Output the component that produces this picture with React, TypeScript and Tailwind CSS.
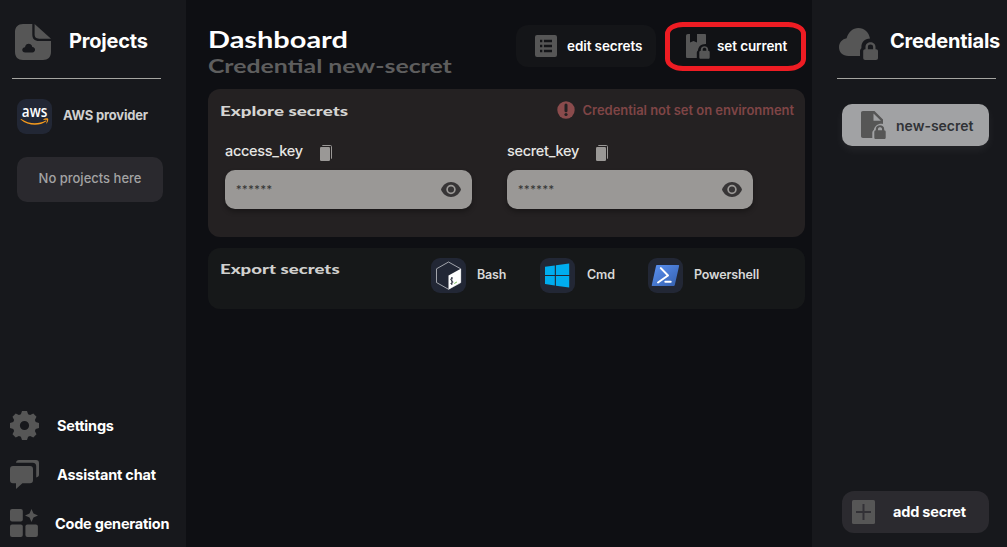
import type { ReactNode } from "react";

type IconProps = { className?: string };

function CloudFileIcon({ className }: IconProps) {
  return (
    <svg viewBox="0 0 36 36" className={className} fill="currentColor">
      <path fillRule="evenodd" d="M17.3 0H8C3 0 0 3 0 8v20c0 5 3 8 8 8h20c5 0 8-3 8-8V17H24c-4.600 0-6.700-2.200-6.700-6.500V0ZM10.200 28.500c-3.700 0-3.900-5.100-.2-5.300.6-4.500 6.600-4.500 7.300-.1 3.700.1 3.700 5.400 0 5.400Z" />
      <path d="M19.600 0 36 14.700H24.200c-3.300 0-4.600-1.300-4.600-4.600V0Z" />
    </svg>
  );
}

function CloudLockIcon({ className }: IconProps) {
  return (
    <svg viewBox="0 0 39 33" className={className} fill="currentColor">
      <path d="M21 28H9.500C3.600 28 0 24 0 19.200c0-4.700 3.300-8.300 7.600-9C9.400 3.800 14 0 19.300 0c6.200 0 10.700 4.500 11.700 10.600-5.500.3-8.600 3.700-8.600 8.500v1.200c-1.100.8-1.400 1.800-1.400 3.200V28Z" />
      <path fillRule="evenodd" d="M26.500 21.300V19c0-6.300 10-6.300 10 0v2.300h.5c1.300 0 2 .7 2 2V30c0 1.300-.7 2-2 2H26.200c-1.300 0-2-.7-2-2v-6.700c0-1.300.7-2 2-2h.3Zm2.400 0h5.200V19c0-3.200-5.200-3.200-5.200 0v2.300Z" />
    </svg>
  );
}

function FileLockIcon({ className }: IconProps) {
  return (
    <svg viewBox="0 0 25 28" className={className} fill="currentColor">
      <path fillRule="evenodd" d="M0 2C0 .7.700 0 2 0h11.500L22 8.500v4.400c-4.700-.8-8.500 2-9.200 6.200-1 .7-1.500 1.500-1.500 2.800V27H2c-1.300 0-2-.7-2-2V2Zm12.500.4v7.300h7.400L12.500 2.400Z" />
      <path fillRule="evenodd" d="M14.800 19.200v-1.100c0-5 8.400-5 8.400 0v1.100c1 .1 1.500.7 1.500 1.700v5.500c0 1.100-.6 1.600-1.700 1.600h-8c-1.100 0-1.700-.5-1.700-1.600v-5.500c0-1 .5-1.600 1.500-1.700Zm2.200 0h4v-1.100c0-2.400-4-2.400-4 0v1.100Z" />
    </svg>
  );
}

function BookLockIcon({ className }: IconProps) {
  return (
    <svg viewBox="0 0 24 25" className={className} fill="currentColor">
      <path d="M2 0h2v8.600L7.500 6.900 11 8.600V0h7.600C19.700 0 20 .4 20 1.500V10c-4.800-.2-7.800 2.600-8 6.500-1 .8-1.200 1.500-1.200 2.700V24H1.600C.5 24 0 23.500 0 22.400V2C0 .7.600 0 2 0Z" />
      <path fillRule="evenodd" d="M14.800 16.700v-1.200c0-4.500 7.400-4.500 7.400 0v1.200c1.200.1 1.500.7 1.500 1.600v5c0 1-.5 1.500-1.500 1.500h-7.400c-1 0-1.500-.5-1.500-1.500v-5c0-.9.4-1.500 1.500-1.600Zm1.900 0h3.600v-1.200c0-2.300-3.600-2.300-3.600 0v1.200Z" />
    </svg>
  );
}

function ListIcon({ className }: IconProps) {
  return (
    <svg viewBox="0 0 22 22" className={className} fill="currentColor">
      <path fillRule="evenodd" d="M2 0h18a2 2 0 0 1 2 2v18a2 2 0 0 1-2 2H2a2 2 0 0 1-2-2V2a2 2 0 0 1 2-2Zm3 4.800v2.400h2.300V4.800H5Zm3.900 0v2.400H17V4.800H8.900ZM5 9.800v2.400h2.300V9.800H5Zm3.900 0v2.400H17V9.800H8.900ZM5 14.800v2.400h2.300v-2.400H5Zm3.900 0v2.400H17v-2.400H8.900Z" />
    </svg>
  );
}

function GearIcon({ className }: IconProps) {
  return (
    <svg viewBox="0 0 29 29" className={className} fill="currentColor">
      <path fillRule="evenodd" d="M12 0h5l1.100 3.300 2 .8L23.300 2.500 26.500 5.700 24.900 8.900l.8 2L29 12v5l-3.300 1.100-.8 2 1.600 3.200-3.200 3.200-3.200-1.600-2 .8L17 29h-5l-1.100-3.300-2-.8-3.200 1.600-3.200-3.200 1.600-3.200-.8-2L0 17v-5l3.300-1.100.8-2L2.500 5.700l3.200-3.200 3.200 1.600 2-.8L12 0Zm2.500 9.900a4.600 4.600 0 1 0 0 9.200 4.600 4.600 0 0 0 0-9.200Z" />
    </svg>
  );
}

function ChatIcon({ className }: IconProps) {
  return (
    <svg viewBox="0 0 29 29" className={className} fill="currentColor">
      <path d="M3 6h17a3 3 0 0 1 3 3v11.300a3 3 0 0 1-3 3h-7.600L6 29v-5.700H3a3 3 0 0 1-3-3V9a3 3 0 0 1 3-3Z" />
      <path d="M6 2.700C6.300 1 7.200 0 9 0h17c2 0 3 1 3 3v11.500c0 1.700-1 2.700-2.800 2.900V6.200c0-2.300-1.200-3.500-3.500-3.500H6Z" />
    </svg>
  );
}

function SparkGridIcon({ className }: IconProps) {
  return (
    <svg viewBox="0 0 28 28" className={className} fill="currentColor">
      <rect width="12.800" height="12.500" rx="2" />
      <rect y="15.500" width="12.800" height="12.500" rx="2" />
      <rect x="15.400" y="15.500" width="12.500" height="12.500" rx="2" />
      <path d="m21.500 0 2 4.400L28 6.500l-4.500 2.100-2 4.400-2-4.400L15 6.500l4.500-2.100 2-4.400Z" />
    </svg>
  );
}

function EyeIcon({ className }: IconProps) {
  return (
    <svg viewBox="0 0 20 15" className={className}>
      <path d="M0 7.500C1.800 2.900 5.500 0 10 0s8.200 2.900 10 7.500C18.200 12.100 14.500 15 10 15S1.800 12.100 0 7.500Z" fill="#373536" />
      <circle cx="10" cy="7.500" r="3.900" fill="#373536" stroke="#9a9896" strokeWidth="1.700" />
    </svg>
  );
}

function CopyIcon() {
  return (
    <svg viewBox="0 0 12 16" className="mt-[3px] h-4 w-3 shrink-0">
      <rect y="2" width="10" height="14" rx="1.200" fill="#9a9896" />
      <path d="M2.300.5h8.200a1 1 0 0 1 1 1v12.200" fill="none" stroke="#9a9896" strokeWidth="1" />
    </svg>
  );
}

function AlertIcon() {
  return (
    <svg viewBox="0 0 18 18" className="size-[18px] shrink-0">
      <circle cx="9" cy="9" r="8.700" fill="#8a4b4c" />
      <path d="M9 4v5.800" stroke="#242122" strokeWidth="3" strokeLinecap="round" />
      <circle cx="9" cy="13.500" r="1.600" fill="#242122" />
    </svg>
  );
}

function AwsLogo() {
  return (
    <svg viewBox="0 0 35 35" className="size-[35px]">
      <text x="4.800" y="18.300" textLength="25.500" lengthAdjust="spacingAndGlyphs" fill="#fff" fontFamily="Open Sans" fontWeight="600" fontSize="15.500">aws</text>
      <path d="M4.300 20c7.400 5.200 17.200 5.300 24.500 1.500.6-.2 1 .3.500.8-7.200 5.400-18.700 4.400-25.400-1.600-.5-.5-.1-1 .4-.7Z" fill="#f79b1c" />
      <path d="M26.500 20.300c1.300-1 4-1.200 4.600-.6.500.7-.2 3.600-1.500 4.700-.4.200-.5 0-.3-.4.400-1 1-2.500.7-2.900-.4-.4-2-.3-3.200-.2-.5 0-.6-.3-.3-.6Z" fill="#f79b1c" />
    </svg>
  );
}

function BashLogo() {
  return (
    <svg viewBox="0 0 35 35" className="size-[35px]">
      <path d="M17.500 4 29.700 10.800v13.900L17.500 31.300 5.500 24.500V10.800L17.500 4Z" fill="#222735" stroke="#c3c5ca" strokeWidth=".8" strokeLinejoin="round" />
      <path d="M17.500 17.500 29.800 10.700V24.500L17.500 31.500v-14Z" fill="#fff" />
      <path d="M21.800 20.100c-1.200-.4-2.200.6-2.100 1.600.2 1.200 2.100.9 2.100 2.200 0 1.200-1 2-2.300 1.600M20.800 19v8" fill="none" stroke="#222735" strokeWidth=".9" />
      <path d="m23.300 25.500 2.600-1.500" stroke="#4da825" strokeWidth=".8" />
    </svg>
  );
}

function WindowsLogo() {
  return (
    <svg viewBox="0 0 35 35" className="size-[35px]" fill="#00adef">
      <path d="m5 8.800 9.800-1.300v9.400H5V8.800ZM15.900 7.300 29.200 5.400v11.500H15.900V7.300ZM5 18h9.800v9.400L5 26.100V18ZM15.900 18h13.300v11.600l-13.300-1.900V18Z" />
    </svg>
  );
}

function PowershellLogo() {
  return (
    <svg viewBox="0 0 35 35" className="size-[35px]">
      <defs>
        <linearGradient id="ps" x1="0" y1="0" x2="1" y2="1">
          <stop stopColor="#5b92f4" />
          <stop offset="1" stopColor="#345fad" />
        </linearGradient>
      </defs>
      <path d="M8.800 7h21.500c.6 0 .9.400.8 1l-4.300 19c-.2.600-.5.900-1.100.9H4.500c-.6 0-.9-.4-.7-1L8 8c.1-.6.4-1 .8-1Z" fill="url(#ps)" />
      <path d="m12.800 10.100 7.200 7.400-10 7M17.300 23.800h5.400" fill="none" stroke="#fff" strokeWidth="2" strokeLinecap="round" strokeLinejoin="round" />
    </svg>
  );
}

function LogoTile({ children }: { children: ReactNode }) {
  return <div className="size-[35px] shrink-0 rounded-[9px] bg-[#222735]">{children}</div>;
}

function SecretField({ label, className }: { label: string; className: string }) {
  return (
    <div className={className}>
      <div className="flex h-5 items-center gap-[17px] whitespace-nowrap text-[14.500px] font-medium tracking-[-0.3px] text-[#e6e6e4]">
        <span>{label}</span>
        <CopyIcon />
      </div>
      <div className="mt-[9px] flex h-[39px] items-center justify-between rounded-[10px] bg-[#9a9896] pr-[11px] pl-[11px] shadow-[0_3px_5px_rgba(0,0,0,0.3)]">
        <span className="text-[11px] tracking-[0.6px] text-[#333]">******</span>
        <EyeIcon className="h-[15px] w-5" />
      </div>
    </div>
  );
}

export default function App() {
  return (
    <div className="relative flex h-[547px] w-[1007px] overflow-hidden bg-[#0e0f13] font-['Inter',sans-serif] whitespace-nowrap text-white">
      <aside className="flex w-[186px] shrink-0 flex-col bg-[#17181c]">
        <div className="flex items-center gap-[18px] pt-6 pl-[15px]">
          <CloudFileIcon className="size-9 text-[#565656]" />
          <h2 className="h-9 text-[20px] leading-[34px] font-bold tracking-[-0.2px]">Projects</h2>
        </div>
        <div className="mt-[18px] ml-3 h-px w-[149px] bg-[#a5a5a1]" />
        <div className="mt-5 ml-[17px] flex items-center gap-[11px]">
          <LogoTile><AwsLogo /></LogoTile>
          <span className="pb-px text-[13px] font-bold tracking-[-0.2px] text-[#d0d0d0]">AWS provider</span>
        </div>
        <div className="mt-[23px] ml-[17px] flex h-[45px] w-[146px] items-center justify-center rounded-[10px] bg-[#2a292e] pb-[2px] text-[13px] font-medium text-[#a3a3a4]">No projects here</div>
        <nav className="mt-auto flex flex-col gap-5 pb-[10px] pl-[10px] text-[14.500px] font-bold tracking-[-0.22px]">
          <div className="flex items-center gap-[18px]"><GearIcon className="size-[29px] text-[#565656]" /><span>Settings</span></div>
          <div className="flex items-center gap-[18px]"><ChatIcon className="size-[29px] text-[#565656]" /><span>Assistant chat</span></div>
          <div className="flex h-7 items-center gap-[17px]"><SparkGridIcon className="size-7 text-[#565656]" /><span className="pt-[2px]">Code generation</span></div>
        </nav>
      </aside>

      <main className="flex w-[626px] shrink-0 flex-col pr-[7px] pl-[22px]">
        <header className="flex h-[89px] pt-[25px]">
          <div className="w-[308px] font-['Lato',sans-serif]">
            <h1 className="h-[30px] origin-left scale-x-[1.315] text-[22px] leading-[30px] font-bold">Dashboard</h1>
            <p className="h-[22px] origin-left scale-x-[1.34] text-[18.500px] leading-[22px] font-bold text-[#5e5e5e]">Credential new-secret</p>
          </div>
          <div className="flex h-[42px] w-[140px] items-center gap-[10px] rounded-xl bg-[#141518] pl-[19px] text-[13.500px] font-semibold tracking-[-0.1px]">
            <ListIcon className="size-[22px] text-[#565656]" />
            <span>edit secrets</span>
          </div>
          <div className="ml-[9px] flex h-[42px] w-[140px] items-center gap-[7px] rounded-xl bg-[#111215] pl-[21px] text-[13.500px] font-semibold tracking-[-0.1px]">
            <BookLockIcon className="h-[25px] w-6 text-[#565656]" />
            <span>set current</span>
          </div>
        </header>

        <section className="h-[148px] rounded-xl bg-[#242122]">
          <div className="flex h-[42px] items-center justify-between pr-[11px] pl-3">
            <h3 className="origin-left scale-x-[1.34] font-['Lato',sans-serif] text-[14px] font-black text-[#d5d5d3]">Explore secrets</h3>
            <div className="flex items-center gap-2 text-[13px] font-semibold tracking-[-0.04px] text-[#7f4546]">
              <AlertIcon />
              <span className="pt-[2px]">Credential not set on environment</span>
            </div>
          </div>
          <div className="mt-[10px] flex gap-[35px] pl-[17px]">
            <SecretField label="access_key" className="w-[247px]" />
            <SecretField label="secret_key" className="w-[246px]" />
          </div>
        </section>

        <section className="mt-[11px] flex h-[61px] rounded-xl bg-[#161819] pt-[10px] pl-3 text-[12.500px] font-semibold tracking-[-0.15px] text-[#d8d8d8]">
          <h3 className="h-[22px] w-[211px] font-['Lato',sans-serif] text-[14px] leading-[22px] font-black tracking-normal text-[#d0d0ce]"><span className="inline-block origin-left scale-x-[1.33]">Export secrets</span></h3>
          <div className="flex h-[35px] w-[109px] items-center gap-[11px]"><LogoTile><BashLogo /></LogoTile><span>Bash</span></div>
          <div className="flex h-[35px] w-[108px] items-center gap-3"><LogoTile><WindowsLogo /></LogoTile><span>Cmd</span></div>
          <div className="flex h-[35px] items-center gap-[11px]"><LogoTile><PowershellLogo /></LogoTile><span>Powershell</span></div>
        </section>
      </main>

      <aside className="flex w-[195px] shrink-0 flex-col bg-[#17181c]">
        <div className="flex pt-[23px] pl-[27px]">
          <CloudLockIcon className="mt-[5px] h-[33px] w-[39px] shrink-0 text-[#565656]" />
          <h2 className="ml-3 h-[37px] text-[20px] leading-[36px] font-bold tracking-[-0.2px]">Credentials</h2>
        </div>
        <div className="mt-[17px] ml-[25px] h-px w-[159px] bg-[#a5a5a1]" />
        <div className="mt-[25px] ml-[30px] flex h-[42px] w-[147px] items-center rounded-[10px] bg-[#a1a2a4] pl-[19px] text-[14px] font-semibold text-[#303236] shadow-[0_4px_10px_rgba(255,255,255,0.06)]">
          <FileLockIcon className="h-7 w-[25px] text-[#565656]" />
          <span className="ml-[10px]">new-secret</span>
        </div>
        <div className="mt-auto mb-[14px] ml-[30px] flex h-[42px] w-[147px] items-center rounded-xl bg-[#2b2a2f] pl-[10px] text-[14.500px] font-bold tracking-[-0.2px]">
          <svg viewBox="0 0 23 24" className="h-6 w-[23px]">
            <rect width="23" height="24" rx="1.500" fill="#565656" />
            <path d="M4 12h15M11.500 4v16" stroke="#323136" strokeWidth="2" />
          </svg>
          <span className="ml-[18px]">add secret</span>
        </div>
      </aside>

      <div className="pointer-events-none absolute top-[22px] left-[665px] h-[49px] w-[141px] rounded-[18px/12px] border-5 border-[#ee1c23]" />
    </div>
  );
}
